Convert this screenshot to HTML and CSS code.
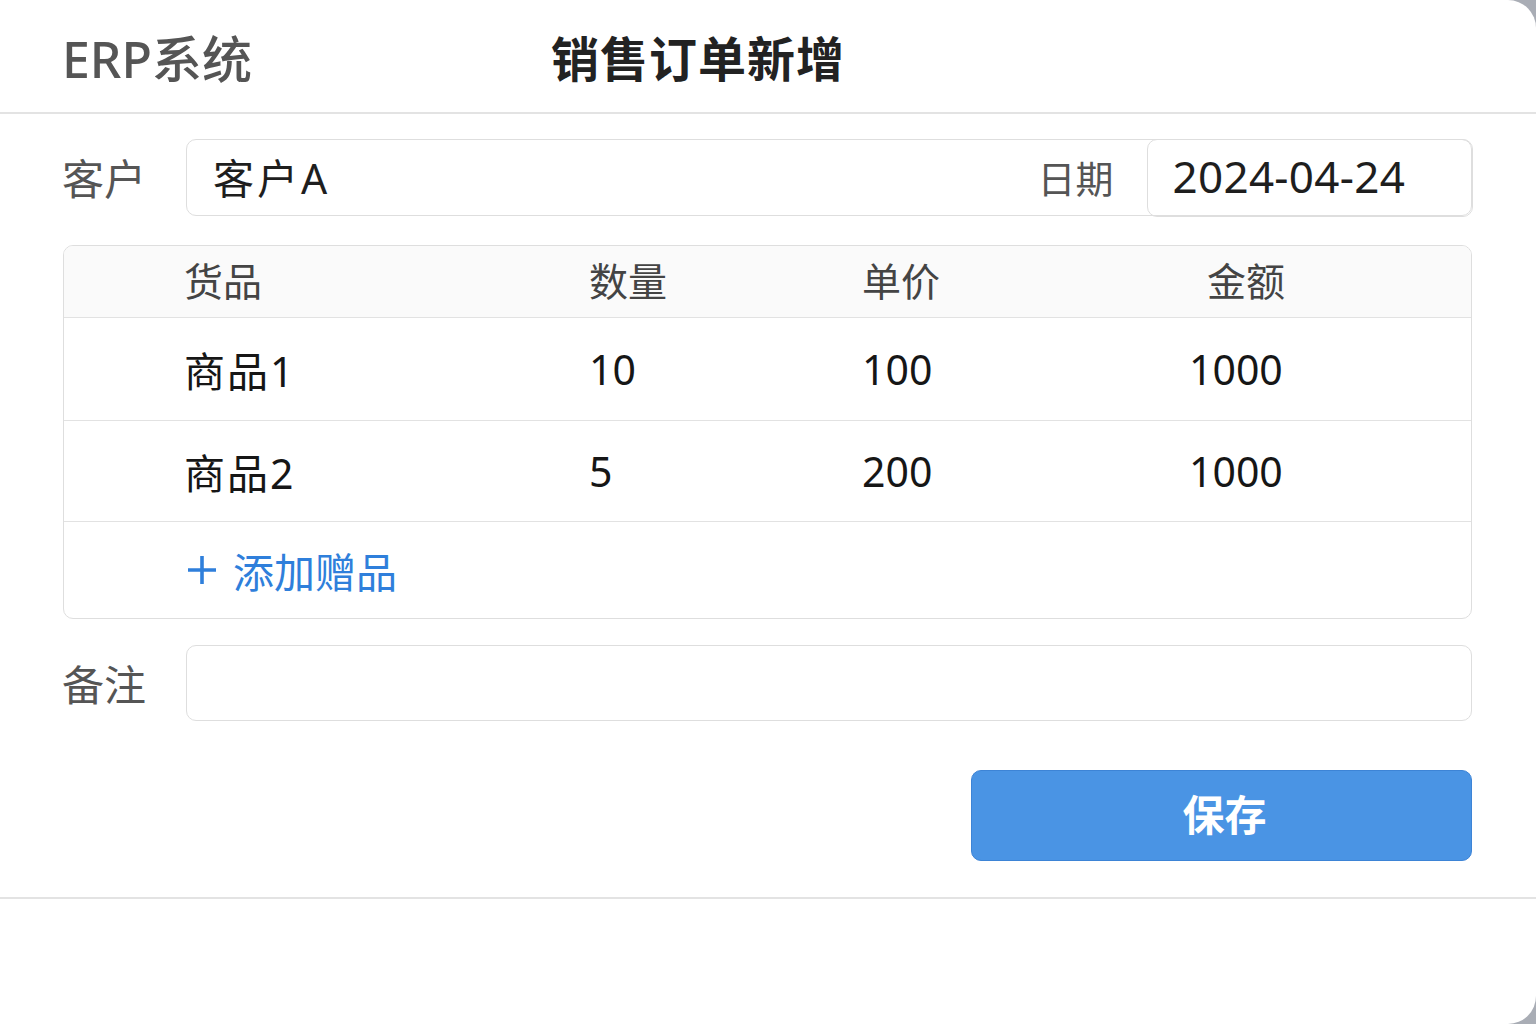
FILE: index.html
```html
<!DOCTYPE html>
<html lang="zh-CN">
<head>
<meta charset="utf-8">
<title>销售订单新增</title>
<link rel="stylesheet" href="styles.css">
</head>
<body>
<div class="window">
  <header class="topbar">
    <div class="brand">ERP系统</div>
    <h1 class="title">销售订单新增</h1>
  </header>
  <main class="form">
    <div class="field-row">
      <div class="label">客户</div>
      <div class="input combo">
        <span class="value">客户A</span>
        <span class="inner-label">日期</span>
        <div class="date-box">2024-04-24</div>
      </div>
    </div>

    <div class="table">
      <div class="trow thead">
        <div class="cell">货品</div>
        <div class="cell">数量</div>
        <div class="cell">单价</div>
        <div class="cell amount-head">金额</div>
      </div>
      <div class="trow tbody r1">
        <div class="cell name">商品1</div>
        <div class="cell">10</div>
        <div class="cell">100</div>
        <div class="cell">1000</div>
      </div>
      <div class="trow tbody r2">
        <div class="cell name">商品2</div>
        <div class="cell">5</div>
        <div class="cell">200</div>
        <div class="cell">1000</div>
      </div>
      <div class="add-row">
        <svg class="plus" width="32" height="32" viewBox="0 0 32 32" aria-hidden="true">
          <path d="M16 2v28M2 16h28" stroke="#2f7fdb" stroke-width="3.6" fill="none"/>
        </svg>
        <span class="add-text">添加赠品</span>
      </div>
    </div>

    <div class="field-row remark">
      <div class="label">备注</div>
      <div class="input"></div>
    </div>

    <div class="actions">
      <button class="btn-save" type="button">保存</button>
    </div>
  </main>
  <div class="footer-line"></div>
</div>
</body>
</html>
```

FILE: styles.css
```css
* { box-sizing: border-box; }

html, body {
  margin: 0;
  padding: 0;
}

body {
  width: 1536px;
  height: 1024px;
  overflow: hidden;
  background: #a9adb5;
  font-family: "Noto Sans", "Noto Sans CJK SC", sans-serif;
  color: #1c1c1c;
}

.window {
  width: 1536px;
  height: 1024px;
  background: #ffffff;
  border-radius: 0 28px 28px 0;
  overflow: hidden;
}

/* Header */
.topbar {
  height: 114px;
  border-bottom: 2px solid #e3e3e3;
  display: flex;
  align-items: center;
  padding-left: 62px;
  padding-bottom: 0;
}

.brand {
  font-size: 50px;
  font-weight: 500;
  color: #555555;
}

.title {
  margin: 0 0 0 299px;
  font-size: 48px;
  font-weight: 700;
  color: #222222;
  letter-spacing: 1px;
}

/* Form */
.form {
  padding: 25px 64px 0 62px;
  display: flex;
  flex-direction: column;
}

.field-row {
  display: flex;
  align-items: center;
  height: 77px;
}

.label {
  width: 124px;
  flex: none;
  font-size: 42px;
  color: #555555;
  padding-bottom: 2px;
}

.input {
  flex: 1;
  height: 100%;
  border: 1.5px solid #dedede;
  border-radius: 10px;
  background: #fff;
}

.combo {
  display: flex;
  align-items: center;
  padding-left: 26px;
}

.value {
  flex: 1;
  font-size: 41px;
  color: #1e1e1e;
  letter-spacing: 3px;
  padding-bottom: 3px;
}

.inner-label {
  font-size: 38px;
  color: #555555;
  margin-right: 33px;
  padding-bottom: 3px;
}

.date-box {
  width: 326px;
  align-self: stretch;
  margin: -1.5px -1.5px -1.5px 0;
  border: 1.5px solid #dedede;
  border-radius: 10px;
  display: flex;
  align-items: center;
  padding-left: 25px;
  padding-bottom: 3px;
  font-size: 44px;
  color: #1e1e1e;
  letter-spacing: 0.3px;
}

/* Table */
.table {
  margin-top: 29px;
  margin-left: 1px;
  border: 1.5px solid #dedede;
  border-radius: 10px;
  overflow: hidden;
}

.trow {
  display: grid;
  grid-template-columns: 405px 273px 327px 1fr;
  align-items: center;
  padding-left: 120px;
  border-bottom: 1.5px solid #e2e2e2;
}

.thead {
  height: 72px;
  background: #fafafa;
  font-size: 39px;
  color: #444444;
  padding-bottom: 5px;
}

.amount-head {
  padding-left: 18px;
}

.tbody {
  font-size: 41px;
  color: #161616;
}

.name {
  letter-spacing: 2px;
}

.r1 { height: 103px; }
.r2 { height: 101px; }

.add-row {
  height: 96px;
  display: flex;
  align-items: center;
  padding-left: 122px;
  color: #2f7fdb;
  font-size: 41px;
}

.plus {
  flex: none;
  margin-right: 15px;
}

/* Remark */
.remark {
  margin-top: 26px;
  height: 76px;
}

/* Actions */
.actions {
  display: flex;
  justify-content: flex-end;
  margin-top: 49px;
}

.btn-save {
  width: 501px;
  height: 91px;
  background: #4a94e4;
  border: 1.5px solid #3d84d6;
  border-radius: 10px;
  color: #ffffff;
  font-family: "Noto Sans", "Noto Sans CJK SC", sans-serif;
  font-size: 42px;
  font-weight: 700;
  letter-spacing: 0;
  padding: 0 0 6px 6px;
  cursor: pointer;
}

.footer-line {
  margin-top: 36px;
  height: 2px;
  background: #e3e3e3;
}
```
